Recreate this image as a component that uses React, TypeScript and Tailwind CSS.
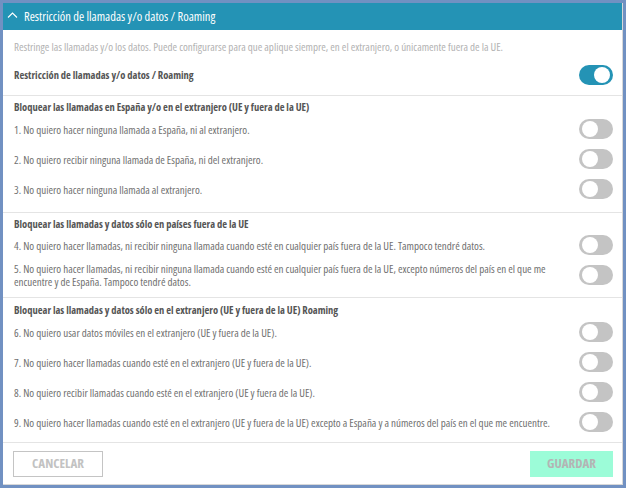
import React from "react";

function Toggle({ on = false }: { on?: boolean }) {
  return (
    <div
      className={`relative h-[20px] w-[34px] shrink-0 rounded-full ${on ? "bg-[#2493b5]" : "bg-[#c4c4c4]"}`}
    >
      <div
        className={`absolute top-[2px] h-[16px] w-[16px] rounded-full bg-white ${on ? "right-[3px]" : "left-[3px]"}`}
      />
    </div>
  );
}

function Item({ text, h }: { text: React.ReactNode; h: string }) {
  return (
    <div className={`flex items-center justify-between ${h}`}>
      <div className="w-[536px] text-[11px] leading-[13px] text-[#707070]">{text}</div>
      <Toggle />
    </div>
  );
}

function Title({ children }: { children: React.ReactNode }) {
  return <div className="h-[14px] text-[10.5px] font-bold leading-[14px] text-[#555]">{children}</div>;
}

export default function App() {
  return (
    <div className="h-[488px] w-[626px] bg-[#7191c2] pl-[3px] pt-[3px] font-['Open_Sans',sans-serif] [font-stretch:87.5%]">
      <div className="flex h-[482px] w-[620px] flex-col border-r border-b border-[#d8d8d8] bg-white">
        <div className="flex h-[27px] items-center bg-[#2493b5] pl-[4px] text-white">
          <svg width="11" height="11" viewBox="0 0 11 11" fill="none" stroke="white" strokeWidth="1.1" className="-mt-[3px]">
            <path d="M1 7.5 L5.5 3 L10 7.5" />
          </svg>
          <span className="ml-[6px] text-[12.5px] leading-[16px]">Restricción de llamadas y/o datos / Roaming</span>
        </div>

        <div className="border-b border-[#e4e4e4] pl-[11px] pr-[9px]">
          <div className="pt-[10px] text-[11px] leading-[14px] text-[#b2b2b2]">
            Restringe las llamadas y/o los datos. Puede configurarse para que aplique siempre, en el extranjero, o únicamente fuera de la UE.
          </div>
          <div className="mt-[11px] flex h-[20px] items-center justify-between">
            <div className="pt-[2px] text-[10.5px] font-bold text-[#555]">Restricción de llamadas y/o datos / Roaming</div>
            <Toggle on />
          </div>
          <div className="h-[10px]" />
        </div>

        <div className="border-b border-[#e4e4e4] pl-[11px] pr-[9px] pt-[4px] pb-[8px]">
          <Title>Bloquear las llamadas en España y/o en el extranjero (UE y fuera de la UE)</Title>
          <Item h="h-[30px]" text="1. No quiero hacer ninguna llamada a España, ni al extranjero." />
          <Item h="h-[30px]" text="2. No quiero recibir ninguna llamada de España, ni del extranjero." />
          <Item h="h-[30px]" text="3. No quiero hacer ninguna llamada al extranjero." />
        </div>

        <div className="border-b border-[#e4e4e4] pl-[11px] pr-[9px] pt-[4px] pb-[6px]">
          <Title>Bloquear las llamadas y datos sólo en países fuera de la UE</Title>
          <Item
            h="h-[28px]"
            text="4. No quiero hacer llamadas, ni recibir ninguna llamada cuando esté en cualquier país fuera de la UE. Tampoco tendré datos."
          />
          <Item
            h="h-[32px]"
            text="5. No quiero hacer llamadas, ni recibir ninguna llamada cuando esté en cualquier país fuera de la UE, excepto números del país en el que me encuentre y de España. Tampoco tendré datos."
          />
        </div>

        <div className="border-b border-[#e4e4e4] pl-[11px] pr-[9px] pt-[5px] pb-[5px]">
          <Title>Bloquear las llamadas y datos sólo en el extranjero (UE y fuera de la UE) Roaming</Title>
          <Item h="h-[30px]" text="6. No quiero usar datos móviles en el extranjero (UE y fuera de la UE)." />
          <Item h="h-[30px]" text="7. No quiero hacer llamadas cuando esté en el extranjero (UE y fuera de la UE)." />
          <Item h="h-[30px]" text="8. No quiero recibir llamadas cuando esté en el extranjero (UE y fuera de la UE)." />
          <Item
            h="h-[30px]"
            text="9. No quiero hacer llamadas cuando esté en el extranjero (UE y fuera de la UE) excepto a España y a números del país en el que me encuentre."
          />
        </div>

        <div className="flex items-start justify-between pl-[10px] pr-[9px] pt-[8px]">
          <button className="flex h-[26px] w-[90px] items-center justify-center border border-[#c4c4c4] bg-white text-[13px] font-bold text-[#c2c2c2]">
            CANCELAR
          </button>
          <button className="flex h-[26px] w-[83px] items-center justify-center bg-[#9cfcd8] text-[13px] font-bold text-[#b4b4b4]">
            GUARDAR
          </button>
        </div>
      </div>
    </div>
  );
}
